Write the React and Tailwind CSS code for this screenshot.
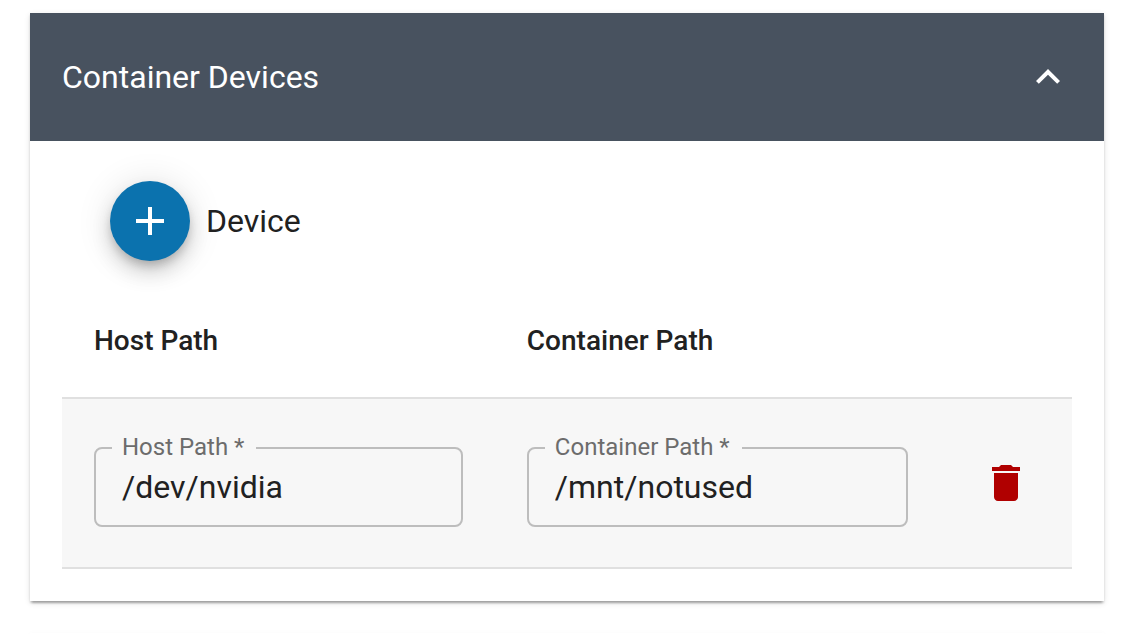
import { useState } from "react";

function ExpandLessIcon() {
  return (
    <svg className="size-12" viewBox="0 0 24 24" fill="currentColor" aria-hidden="true">
      <path d="M12 8l-6 6 1.41 1.41L12 10.83l4.59 4.58L18 14z" />
    </svg>
  );
}

function AddIcon() {
  return (
    <svg className="size-12" viewBox="0 0 24 24" fill="currentColor" aria-hidden="true">
      <path d="M19 13h-6v6h-2v-6H5v-2h6V5h2v6h6v2z" />
    </svg>
  );
}

function DeleteIcon() {
  return (
    <svg className="size-12" viewBox="0 0 24 24" fill="currentColor" aria-hidden="true">
      <path d="M6 19c0 1.1.9 2 2 2h8c1.1 0 2-.9 2-2V7H6v12zM19 4h-3.5l-1-1h-5l-1 1H5v2h14V4z" />
    </svg>
  );
}

function OutlinedField({ id, label, initial }) {
  const [value, setValue] = useState(initial);
  return (
    <div className="relative mt-4 mb-2">
      <label
        htmlFor={id}
        className="absolute -top-3 left-[18px] bg-[#f7f7f7] pr-3 pl-2.5 text-2xl leading-6 text-[#6c6c6c]"
      >
        {label} *
      </label>
      <input
        id={id}
        type="text"
        required
        value={value}
        onChange={(e) => setValue(e.target.value)}
        className="block h-20 w-full rounded-lg border-2 border-[#bdbdbd] bg-transparent px-[26px] text-[32px] text-[#212121] outline-none"
      />
    </div>
  );
}

const cardShadow =
  "shadow-[0_4px_2px_-2px_rgba(0,0,0,0.2),0_2px_2px_0_rgba(0,0,0,0.14),0_2px_6px_0_rgba(0,0,0,0.12)]";

export default function App() {
  const [open, setOpen] = useState(true);
  return (
    <main className="flex flex-col gap-8 bg-white pt-[13px] pr-[33px] pl-[30px] font-[Roboto,sans-serif] text-[#212121]">
      <section className={`bg-white ${cardShadow}`}>
        <header className="flex h-32 items-center justify-between bg-[#48525f] px-8 text-white">
          <h2 className="text-[32px] leading-12">Container Devices</h2>
          <button type="button" aria-label="Toggle section" aria-expanded={open} onClick={() => setOpen(!open)}>
            <ExpandLessIcon />
          </button>
        </header>
        {open && (
          <div className="flex flex-col gap-6 px-8 pt-10 pb-8">
            <div className="flex items-center gap-4 px-12">
              <button
                id="add-device"
                type="button"
                aria-label="Add device"
                className="flex size-20 items-center justify-center rounded-full bg-[#0b72ae] text-white shadow-[0_6px_10px_-2px_rgba(0,0,0,0.2),0_12px_20px_0_rgba(0,0,0,0.14),0_2px_36px_0_rgba(0,0,0,0.12)]"
              >
                <AddIcon />
              </button>
              <label htmlFor="add-device" className="text-[32px] leading-12">
                Device
              </label>
            </div>
            <table className="w-full table-fixed border-collapse text-left">
              <thead>
                <tr className="border-b-2 border-[#e0e0e0]">
                  <th className="w-3/7 p-8 text-[28px] leading-12 font-medium">Host Path</th>
                  <th className="p-8 text-[28px] leading-12 font-medium">Container Path</th>
                  <th className="w-[132px]" />
                </tr>
              </thead>
              <tbody>
                <tr className="border-b-2 border-[#e0e0e0] bg-[#f7f7f7]">
                  <td className="p-8">
                    <OutlinedField id="host-path" label="Host Path" initial="/dev/nvidia" />
                  </td>
                  <td className="p-8">
                    <OutlinedField id="container-path" label="Container Path" initial="/mnt/notused" />
                  </td>
                  <td className="text-center align-middle">
                    <button type="button" aria-label="Delete device" className="align-middle text-[#b00000]">
                      <DeleteIcon />
                    </button>
                  </td>
                </tr>
              </tbody>
            </table>
          </div>
        )}
      </section>
      <section className={`h-px bg-white ${cardShadow}`} />
    </main>
  );
}
